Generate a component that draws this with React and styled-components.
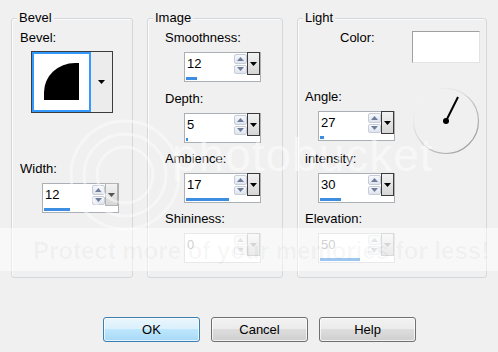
import React from "react";
import styled, { createGlobalStyle } from "styled-components";

const GlobalStyle = createGlobalStyle`
  html, body {
    margin: 0;
    padding: 0;
    background: #f0f0f0;
  }
  body {
    font-family: "Liberation Sans", Arial, sans-serif;
    font-size: 13px;
    color: #000;
  }
`;

const Triangle = ({ up, color = "#000" }) => (
  <svg width="7" height="4" viewBox="0 0 7 4">
    <path d={up ? "M0 4 L3.5 0 L7 4 Z" : "M0 0 L7 0 L3.5 4 Z"} fill={color} />
  </svg>
);

const SpinBox = ({ value, bar, indent, disabled, active = true }) => (
  <Spin $indent={indent} $disabled={disabled}>
    <SpinTop>
      <Edit $disabled={disabled}>{value}</Edit>
      <Arrows>
        <ArrowBtn $disabled={disabled}>
          <Triangle up color={disabled ? "#c4c8d0" : "#6f7c9c"} />
        </ArrowBtn>
        <ArrowBtn $disabled={disabled}>
          <Triangle color={disabled ? "#c4c8d0" : "#6f7c9c"} />
        </ArrowBtn>
      </Arrows>
      <Drop $dark={active && !disabled}>
        <Triangle color={disabled ? "#a8a8a8" : active ? "#000" : "#555"} />
      </Drop>
    </SpinTop>
    <Track>{bar > 0 && <Bar style={{ width: bar }} />}</Track>
  </Spin>
);

const Field = ({ label, top, labelIndent, spinIndent, ...spin }) => (
  <FieldWrap $top={top}>
    <Label $indent={labelIndent} $disabled={spin.disabled && false}>
      {label}
    </Label>
    <SpinBox indent={spinIndent} {...spin} />
  </FieldWrap>
);

const Dial = () => (
  <DialWrap>
    <svg width="68" height="68" viewBox="0 0 68 68">
      <defs>
        <linearGradient id="ring" x1="0" y1="0" x2="1" y2="1">
          <stop offset="0" stopColor="#ffffff" />
          <stop offset="0.45" stopColor="#d6d6d6" />
          <stop offset="1" stopColor="#8e8e8e" />
        </linearGradient>
      </defs>
      <circle cx="34" cy="34" r="32.5" fill="none" stroke="url(#ring)" strokeWidth="1.2" />
      <line x1="34" y1="34" x2="46" y2="10" stroke="#000" strokeWidth="2" />
      <circle cx="34" cy="34" r="3" fill="#000" />
    </svg>
  </DialWrap>
);

export default function App() {
  return (
    <Dialog>
      <GlobalStyle />
      <Groups>
        <Group $width={122}>
          <Title>Bevel</Title>
          <Label $indent={8} $top={5}>Bevel:</Label>
          <Picker>
            <Preview>
              <svg width="55" height="56" viewBox="0 0 55 56">
                <path d="M10 46 V38 A31 29 0 0 1 41 9 H45 V46 Z" fill="#000" />
              </svg>
            </Preview>
            <PickerDrop>
              <Triangle />
            </PickerDrop>
          </Picker>
          <Field label="Width:" top={48} labelIndent={8} spinIndent={30} value="12" bar={26} active={false} />
        </Group>

        <Group $width={136}>
          <Title>Image</Title>
          <Field label="Smoothness:" top={5} labelIndent={17} spinIndent={36} value="12" bar={11} />
          <Field label="Depth:" top={9} labelIndent={17} spinIndent={36} value="5" bar={2} />
          <Field label="Ambience:" top={8} labelIndent={17} spinIndent={36} value="17" bar={43} />
          <Field label="Shininess:" top={8} labelIndent={17} spinIndent={36} value="0" bar={0} disabled />
        </Group>

        <Group $width={190}>
          <Title>Light</Title>
          <ColorRow>
            <Label $indent={42}>Color:</Label>
            <Swatch />
          </ColorRow>
          <AngleRow>
            <Field label="Angle:" top={2} labelIndent={7} spinIndent={20} value="27" bar={4} />
            <Dial />
          </AngleRow>
          <Field label="intensity:" top={10} labelIndent={7} spinIndent={20} value="30" bar={21} />
          <Field label="Elevation:" top={8} labelIndent={7} spinIndent={20} value="50" bar={40} disabled />
        </Group>
      </Groups>

      <Buttons>
        <Button $default>OK</Button>
        <Button>Cancel</Button>
        <Button>Help</Button>
      </Buttons>

      <Watermark>
        <Rings width="140" height="140" viewBox="0 0 140 140">
          <circle cx="65" cy="65" r="28" fill="none" stroke="#fff" strokeWidth="3" />
          <circle cx="65" cy="65" r="41" fill="none" stroke="#fff" strokeWidth="3" />
          <circle cx="65" cy="65" r="54" fill="none" stroke="#fff" strokeWidth="3" />
        </Rings>
        <Brand>photobucket</Brand>
        <Band>
          <BandText>
            Protect more of your <Blue>memories</Blue> for less!
          </BandText>
        </Band>
      </Watermark>
    </Dialog>
  );
}

const Dialog = styled.div`
  position: relative;
  width: 498px;
  height: 352px;
  box-sizing: border-box;
  overflow: hidden;
  background: #f0f0f0;
  padding: 18px 11px 0;
`;

const Groups = styled.div`
  display: flex;
  gap: 14px;
  align-items: flex-start;
`;

const Group = styled.div`
  box-sizing: border-box;
  width: ${(p) => p.$width}px;
  height: 260px;
  border: 1px solid #d3d8dc;
  border-radius: 3px;
  box-shadow: inset 1px 1px 0 #fbfbfb;
  display: flex;
  flex-direction: column;
  align-items: flex-start;
`;

const Title = styled.div`
  margin: -9px 0 0 5px;
  padding: 0 2px;
  height: 15px;
  line-height: 15px;
  background: #f0f0f0;
`;

const Label = styled.div`
  line-height: 15px;
  height: 15px;
  white-space: nowrap;
  margin-left: ${(p) => p.$indent || 0}px;
  margin-top: ${(p) => p.$top || 0}px;
`;

const FieldWrap = styled.div`
  display: flex;
  flex-direction: column;
  align-items: flex-start;
  margin-top: ${(p) => p.$top}px;
`;

const Spin = styled.div`
  box-sizing: border-box;
  width: 77px;
  height: 30px;
  margin: 7px 0 0 ${(p) => p.$indent}px;
  border: 1px solid ${(p) => (p.$disabled ? "#d0d3d6" : "#abb0b6")};
  background: #fff;
  display: flex;
  flex-direction: column;
`;

const SpinTop = styled.div`
  display: flex;
  height: 22px;
`;

const Edit = styled.div`
  flex: 1;
  padding: 3px 0 0 2px;
  line-height: 16px;
  color: ${(p) => (p.$disabled ? "#a3a3a3" : "#000")};
`;

const Arrows = styled.div`
  width: 13px;
  display: flex;
  flex-direction: column;
  gap: 1px;
  padding: 1px 0;
  box-sizing: border-box;
`;

const ArrowBtn = styled.div`
  flex: 1;
  display: flex;
  align-items: center;
  justify-content: center;
  border: 1px solid ${(p) => (p.$disabled ? "#e2e4e8" : "#c6ccd8")};
  border-radius: 2px;
  background: ${(p) =>
    p.$disabled ? "#f6f6f6" : "linear-gradient(#f6f8fb, #dfe4ed)"};
`;

const Drop = styled.div`
  box-sizing: border-box;
  width: 13px;
  margin-top: -1px;
  border: 1px solid ${(p) => (p.$dark ? "#3a3a3a" : "#b4b4b4")};
  background: linear-gradient(#f2f2f2, #d6d6d6);
  display: flex;
  align-items: center;
  justify-content: center;
`;

const Track = styled.div`
  flex: 1;
  padding: 2px 0 0 1px;
`;

const Bar = styled.div`
  height: 3px;
  background: #3d8ee0;
`;

const Picker = styled.div`
  box-sizing: border-box;
  width: 82px;
  height: 62px;
  margin: 6px 0 0 19px;
  border: 1px solid #3c3c3c;
  display: flex;
`;

const Preview = styled.div`
  box-sizing: border-box;
  width: 59px;
  border: 2px solid #3399ff;
  background: #fff;
  display: flex;
`;

const PickerDrop = styled.div`
  flex: 1;
  background: #ececec;
  display: flex;
  align-items: center;
  justify-content: center;
`;

const ColorRow = styled.div`
  align-self: stretch;
  display: flex;
  align-items: flex-start;
  margin-top: 5px;
  padding-right: 6px;
`;

const Swatch = styled.div`
  box-sizing: border-box;
  width: 68px;
  height: 32px;
  margin: 1px 0 0 auto;
  background: #fff;
  border: 1px solid;
  border-color: #a0a0a0 #e3e3e3 #e3e3e3 #a0a0a0;
`;

const AngleRow = styled.div`
  align-self: stretch;
  display: flex;
  align-items: flex-start;
  height: 54px;
  margin-top: 24px;
  padding-right: 6px;
`;

const DialWrap = styled.div`
  margin-left: auto;
  width: 68px;
  height: 68px;
`;

const Buttons = styled.div`
  display: flex;
  gap: 11px;
  margin-top: 39px;
  padding-left: 92px;
`;

const Button = styled.button`
  box-sizing: border-box;
  width: 97px;
  height: 25px;
  padding: 0;
  font: 13px "Liberation Sans", Arial, sans-serif;
  color: #000;
  border: 1px solid ${(p) => (p.$default ? "#3c7fb1" : "#707070")};
  border-radius: 3px;
  background: ${(p) =>
    p.$default
      ? "linear-gradient(#eaf6fd 0%, #d9f0fc 50%, #bee6fd 50%, #a7d9f5 100%)"
      : "linear-gradient(#f2f2f2 0%, #ebebeb 50%, #dddddd 50%, #cfcfcf 100%)"};
  box-shadow: inset 0 0 0 1px rgba(255, 255, 255, 0.7);
`;

const Watermark = styled.div`
  position: absolute;
  inset: 0;
  pointer-events: none;
`;

const Rings = styled.svg`
  position: absolute;
  left: 60px;
  top: 110px;
  opacity: 0.45;
`;

const Brand = styled.div`
  position: absolute;
  left: 172px;
  top: 128px;
  font-size: 46px;
  color: rgba(255, 255, 255, 0.5);
  letter-spacing: 1px;
`;

const Band = styled.div`
  position: absolute;
  left: 0;
  right: 0;
  top: 228px;
  height: 43px;
  background: rgba(255, 255, 255, 0.5);
`;

const BandText = styled.div`
  position: absolute;
  left: 33px;
  top: 9px;
  font-size: 24px;
  font-weight: bold;
  white-space: nowrap;
  color: rgba(0, 0, 0, 0.035);
`;

const Blue = styled.span`
  color: rgba(0, 0, 0, 0.035);
`;
